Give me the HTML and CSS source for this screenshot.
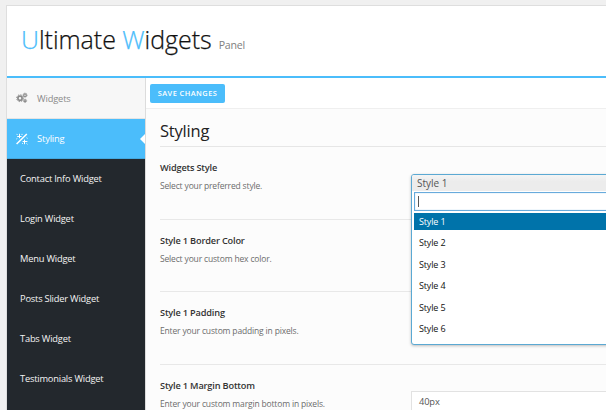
FILE: index.html
```html
<!DOCTYPE html>
<html lang="en">
<head>
<meta charset="utf-8">
<title>Ultimate Widgets Panel</title>
<link rel="stylesheet" href="styles.css">
</head>
<body>
<div class="panel">
  <header class="header">
    <h1 class="title"><span>U</span>ltimate <span>W</span>idgets</h1>
    <span class="subtitle">Panel</span>
  </header>
  <div class="body">
    <nav class="sidebar">
      <a class="tab">
        <svg class="icon" viewBox="0 0 12 12" fill="none" stroke="currentColor">
          <circle cx="4" cy="6.2" r="2.1" stroke-width="1.7"/>
          <circle cx="4" cy="6.2" r="3.4" stroke-width="1" stroke-dasharray="1.35 1.32"/>
          <circle cx="9" cy="3.2" r="1.3" stroke-width="1.2"/>
          <circle cx="9" cy="3.2" r="2.1" stroke-width=".7" stroke-dasharray="1 .65"/>
          <circle cx="9" cy="8.8" r="1" stroke-width="1.1"/>
          <circle cx="9" cy="8.8" r="1.7" stroke-width=".7" stroke-dasharray=".8 .6"/>
        </svg>
        Widgets
      </a>
      <a class="tab active">
        <svg class="icon" viewBox="0 0 12 12" fill="none" stroke="currentColor">
          <path d="M.6 11 10.8 1" stroke-width="1.5"/>
          <path d="M3.5 .8v4.4M1.2 3.5H5.6M.5.9l.9.9M6 .9v1M.4 6l.9-.6M6.6 8.5h4.8M8.5 6.6v4.6M10.6 4.8l.9.5M6 10.8l.8-.5M10.5 10.4l.9.8" stroke-width="1"/>
        </svg>
        Styling
      </a>
      <a class="sub">Contact Info Widget</a>
      <a class="sub">Login Widget</a>
      <a class="sub">Menu Widget</a>
      <a class="sub">Posts Slider Widget</a>
      <a class="sub">Tabs Widget</a>
      <a class="sub">Testimonials Widget</a>
    </nav>
    <main class="content">
      <div class="toolbar"><button class="save">SAVE CHANGES</button></div>
      <div class="options">
        <h2 class="heading">Styling</h2>
        <section class="row">
          <div class="info"><h3>Widgets Style</h3><p>Select your preferred style.</p></div>
          <div class="control">
            <div class="dropdown">
              <div class="selected">Style 1</div>
              <div class="search"><span class="caret"></span></div>
              <ul class="choices">
                <li class="current">Style 1</li>
                <li>Style 2</li>
                <li>Style 3</li>
                <li>Style 4</li>
                <li>Style 5</li>
                <li>Style 6</li>
              </ul>
            </div>
          </div>
        </section>
        <section class="row">
          <div class="info"><h3>Style 1 Border Color</h3><p>Select your custom hex color.</p></div>
        </section>
        <section class="row">
          <div class="info"><h3>Style 1 Padding</h3><p>Enter your custom padding in pixels.</p></div>
        </section>
        <section class="row">
          <div class="info"><h3>Style 1 Margin Bottom</h3><p>Enter your custom margin bottom in pixels.</p></div>
          <div class="control"><div class="field">40px</div></div>
        </section>
      </div>
    </main>
  </div>
</div>
</body>
</html>
```
FILE: styles.css
```css
* { box-sizing: border-box; }
html, body { height: 100%; }
body {
  margin: 0;
  padding: 5px 0 0 6px;
  overflow: hidden;
  background: #f0f0f0;
  font-family: "Open Sans", sans-serif;
  font-size: 9.3px;
  letter-spacing: -.14px;
}
h1, h2, h3, p, ul { margin: 0; padding: 0; font-weight: 400; }
.panel {
  display: flex;
  flex-direction: column;
  height: 405px;
  overflow: hidden;
  border: 1px solid #dedede;
  border-width: 1px 0 0 1px;
  background: #fff;
}
.header {
  display: flex;
  align-items: baseline;
  flex: none;
  height: 72px;
  padding: 16px 0 0 14px;
  border-bottom: 2px solid #4bbdfb;
}
.title {
  font-size: 25px;
  font-weight: 300;
  line-height: 34px;
  letter-spacing: -.03px;
  color: #111;
  -webkit-text-stroke: .25px currentColor;
}
.title span { color: #4bbdfb; }
.subtitle { margin-left: 7px; font-size: 10.6px; color: #808080; letter-spacing: -.2px; }
.body { display: flex; flex: 1; min-height: 0; }
.sidebar {
  flex: none;
  width: 139px;
  border-right: 1px solid #dcdcdc;
  background: #23282d;
}
.tab {
  display: flex;
  align-items: center;
  position: relative;
  height: 41px;
  padding-left: 9px;
  border-bottom: 1px solid #e4e4e4;
  background: #f7f7f7;
  color: #8a8a8a;
}
.icon { width: 12px; height: 12px; margin-right: 9px; }
.tab.active {
  height: 40px;
  border-bottom: 1px solid #43a9e0;
  background: #4bbdfb;
  color: #fff;
}
.tab.active::after {
  content: "";
  position: absolute;
  right: 0;
  top: 15px;
  border: solid transparent;
  border-width: 5px 5px 5px 0;
  border-right-color: #fff;
}
.sub {
  display: block;
  height: 40.1px;
  padding-left: 13px;
  line-height: 40px;
  letter-spacing: -.2px;
  color: #f4f4f4;
}
.content { flex: 1; min-width: 0; background: #fcfcfc; }
.toolbar {
  height: 31px;
  padding: 6px 4px;
  border-bottom: 1px solid #efefef;
  background: #fff;
}
.save {
  display: block;
  width: 75px;
  height: 19px;
  padding: 0;
  border: 0;
  border-radius: 2px;
  background: #4bbdfb;
  color: #fff;
  font: 600 7.4px/19px "Open Sans", sans-serif;
  letter-spacing: .46px;
}
.options { padding-left: 14px; }
.heading {
  height: 38px;
  padding-top: 10px;
  border-bottom: 1px solid #e6e6e6;
  font-size: 16.5px;
  line-height: 24px;
  letter-spacing: -.2px;
  color: #222;
}
.row {
  display: flex;
  height: 72.7px;
  padding-top: 14px;
  border-bottom: 1px solid #e8e8e8;
}
.info { flex: none; width: 251px; }
.info h3 { font-size: 9.2px; font-weight: 600; line-height: 14px; letter-spacing: -.17px; color: #333; }
.info p { margin-top: 4px; font-size: 8.5px; line-height: 14px; letter-spacing: -.16px; color: #6c6c6c; }
.control { position: relative; flex: 1; }
.field {
  height: 24px;
  margin-top: 12px;
  padding-left: 7px;
  border: 1px solid #e2e2e2;
  border-right: 0;
  background: #fff;
  line-height: 20px;
  color: #555;
}
.dropdown {
  position: absolute;
  left: 0;
  top: 13px;
  z-index: 2;
  width: 240px;
  height: 171px;
  border: 1px solid #5ba9d3;
  border-radius: 3px;
  background: #fff;
  box-shadow: 0 1px 3px rgba(0, 0, 0, .25);
}
.selected {
  height: 16px;
  padding-left: 5px;
  border-radius: 2px 0 0;
  background: linear-gradient(#f4f4f4, #ececec 40%);
  font-size: 10px;
  line-height: 17px;
  letter-spacing: 0;
  color: #555;
}
.search {
  display: flex;
  align-items: center;
  height: 19px;
  margin: 1px 2px 2px;
  padding-left: 3px;
  border: 1px solid #68abdc;
  background: #fff;
  box-shadow: inset 0 0 1px #68abdc;
}
.caret { width: 1px; height: 11px; background: #555; }
.choices { margin-left: 2px; list-style: none; }
.choices li {
  height: 21.5px;
  padding-left: 5px;
  font-size: 9px;
  line-height: 21.5px;
  color: #111;
}
.choices .current { height: 17px; margin-bottom: 2px; line-height: 18px; background: #0073aa; color: #fff; }
```
